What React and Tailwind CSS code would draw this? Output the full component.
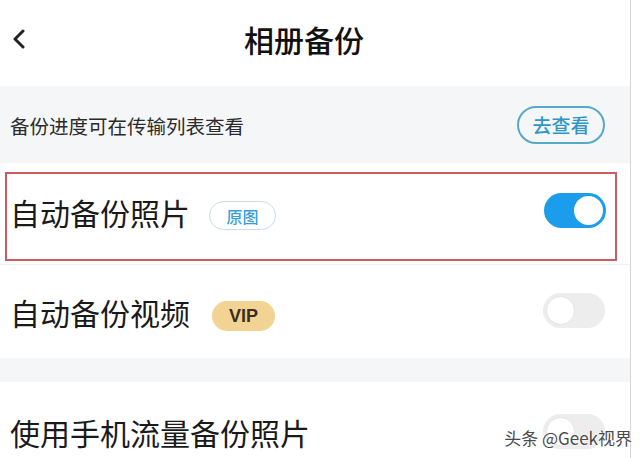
import { useState } from 'react';

const font = { fontFamily: '"Noto Sans CJK SC", "Noto Sans", sans-serif' };

function Toggle({ on }) {
  return (
    <div
      className={`w-[62px] h-[35px] rounded-full p-[3px] flex ${
        on ? 'bg-[#1b9deb] justify-end' : 'bg-[#ededed] justify-start'
      }`}
    >
      <span
        className={`w-[29px] h-[29px] rounded-full bg-white ${on ? '' : 'border border-[#e4e4e4]'}`}
      />
    </div>
  );
}

export default function App() {
  const [photo] = useState(true);

  return (
    <div className="relative w-[640px] h-[458px] overflow-hidden bg-white flex" style={font}>
      <div className="w-[631px] h-full border-r border-[#d6d6d6] flex flex-col">
        {/* header */}
        <div className="h-[86px] flex items-center pl-[12px] pb-[8px]">
          <svg width="14" height="20" viewBox="0 0 14 20" className="shrink-0">
            <path d="M11 2 L3 10 L11 18" fill="none" stroke="#222" strokeWidth="3" strokeLinecap="round" strokeLinejoin="round" />
          </svg>
          <h1 className="flex-1 text-center text-[30px] font-medium text-[#111] mr-[48px] leading-none">相册备份</h1>
        </div>

        {/* hint band */}
        <div className="h-[77px] bg-[#f5f6f8] flex items-center justify-between pl-[10px] pr-[25px]">
          <p className="text-[19.5px] text-[#2b2b2b] pt-[3px]">备份进度可在传输列表查看</p>
          <button className="w-[88px] h-[38px] rounded-full border-2 border-[#55aac7] text-[19px] font-medium text-[#2e97c3] flex items-center justify-center leading-none">
            去查看
          </button>
        </div>

        {/* auto backup photos */}
        <div className="h-[101px] pl-[5px] pr-[13px] pt-[9px] pb-[3px]">
          <div className="h-full border-2 border-[#cb5c62] flex items-center pl-[3px] pr-[9px] pb-[10px]">
            <span className="text-[30px] text-[#1a1a1a] leading-none">自动备份照片</span>
            <span className="ml-[19px] mt-[8px] w-[67px] h-[29px] rounded-full border-[1.5px] border-[#c9dce6] text-[16px] font-medium text-[#3a9fd6] flex items-center justify-center leading-none">
              原图
            </span>
            <div className="ml-auto mt-[-2px]">
              <Toggle on={photo} />
            </div>
          </div>
        </div>

        {/* auto backup videos */}
        <div className="h-[94px] flex items-center pl-[10px] pr-[25px] border-t border-[#f0f0f0]">
          <span className="text-[30px] text-[#1a1a1a] leading-none">自动备份视频</span>
          <span
            className="ml-[22px] mt-[8px] w-[63px] h-[30px] rounded-full bg-[#f2d394] text-[18px] font-bold text-[#3a2f1c] flex items-center justify-center leading-none"
            style={{ fontFamily: '"Liberation Sans", Arial, sans-serif' }}
          >
            VIP
          </span>
          <div className="ml-auto mt-[-2px]">
            <Toggle on={false} />
          </div>
        </div>

        <div className="h-[24px] bg-[#f5f6f8]" />

        {/* mobile data */}
        <div className="flex-1 flex items-start pt-[35px] pl-[10px] pr-[25px]">
          <span className="text-[30px] text-[#1a1a1a] leading-none">使用手机流量备份照片</span>
          <div className="ml-auto mt-[-3px]">
            <Toggle on={false} />
          </div>
        </div>
      </div>

      {/* watermark */}
      <span
        className="absolute right-[8px] bottom-[12px] text-[17px] text-[#4a4a4a] leading-none"
        style={{ textShadow: '0 0 2px #fff, 0 0 2px #fff' }}
      >
        头条 @Geek视界
      </span>
    </div>
  );
}
